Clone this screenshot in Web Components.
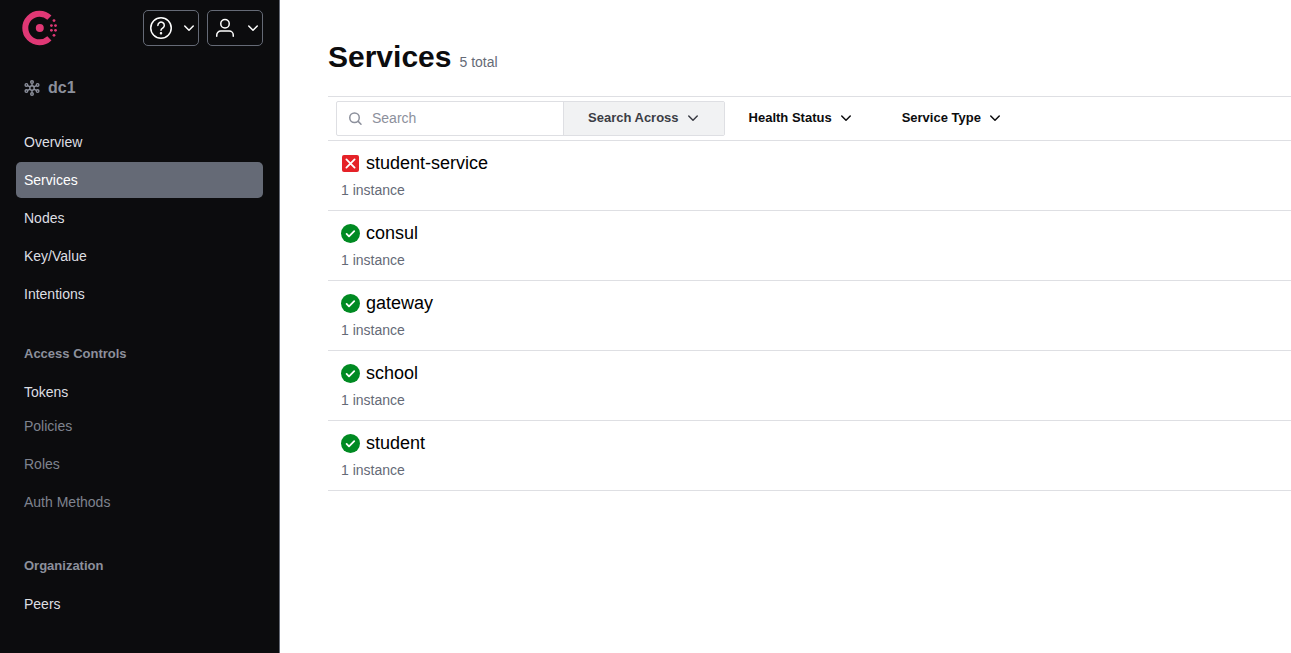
<!DOCTYPE html>
<html lang="en">
<head>
<meta charset="utf-8">
<title>Services - Consul</title>
<style>
  html, body { margin: 0; height: 100%; }
  body { font-family: "Liberation Sans", Arial, sans-serif; font-size: 14px; line-height: 20px; background: #fff; color: #0c0c0e; }
</style>
</head>
<body>
<consul-app></consul-app>

<template id="consul-app">
  <style>
    :host { display: grid; grid-template-columns: 280px minmax(0, 1fr); min-height: 100vh; }
    main { padding: 40px 0 48px 48px; }
    header { display: flex; align-items: baseline; gap: 8px; padding-bottom: 22px; }
    h1 { margin: 0; font-size: 30px; line-height: 34px; font-weight: 700; }
    header span { color: #656a76; }
    ul { margin: 0; padding: 0; list-style: none; }
  </style>
  <side-bar></side-bar>
  <main>
    <header><h1>Services</h1><span>5 total</span></header>
    <search-bar></search-bar>
    <ul>
      <li><service-row status="critical">student-service</service-row></li>
      <li><service-row status="passing">consul</service-row></li>
      <li><service-row status="passing">gateway</service-row></li>
      <li><service-row status="passing">school</service-row></li>
      <li><service-row status="passing">student</service-row></li>
    </ul>
  </main>
</template>

<template id="side-bar">
  <style>
    :host { display: block; box-sizing: border-box; background: #0c0c0e; border-right: 1px solid #656a76; padding: 10px 16px; color: #8c909c; }
    .top { display: flex; gap: 8px; align-items: center; }
    .logo { display: flex; margin: 0 auto 0 6px; }
    .dc { display: flex; align-items: center; gap: 8px; padding: 0 8px; height: 36px; margin: 24px 0 18px; font-size: 16px; font-weight: 700; }
    nav { display: flex; flex-direction: column; gap: 2px; }
    h2 { margin: 22px 0 0; padding: 0 8px; font-size: 13px; line-height: 36px; font-weight: 700; }
    .locked { display: flex; flex-direction: column; gap: 6px; padding: 0 8px; line-height: 32px; margin: -2px 0 6px; color: #7f838f; }
  </style>
  <div class="top">
    <a class="logo" href="#" aria-label="Consul">
      <svg width="36" height="36" viewBox="0 0 36 36" fill="#e03875">
        <path d="M27.4 7.6A14.3 14.3 0 1 0 27.4 28.4" fill="none" stroke="#e03875" stroke-width="6"/>
        <circle cx="17.8" cy="18" r="4"/>
        <circle cx="32" cy="10.6" r="1.4"/><circle cx="29.4" cy="15.6" r="1.4"/><circle cx="33.5" cy="15.6" r="1.4"/>
        <circle cx="29.4" cy="20.3" r="1.4"/><circle cx="33.5" cy="20.3" r="1.4"/><circle cx="32" cy="25.3" r="1.4"/>
      </svg>
    </a>
    <icon-menu label="Help">
      <svg width="24" height="24" viewBox="0 0 24 24" fill="none" stroke="#fff" stroke-width="1.5" stroke-linecap="round" stroke-linejoin="round">
        <circle cx="12" cy="12" r="10.25"/><path d="M8.9 9.4a3.2 3.2 0 1 1 4.9 2.6c-1.1.7-1.8 1.1-1.8 2.3"/><circle cx="12" cy="17.2" r=".5" fill="#fff"/>
      </svg>
    </icon-menu>
    <icon-menu label="Account">
      <svg width="24" height="24" viewBox="0 0 24 24" fill="none" stroke="#fff" stroke-width="1.5" stroke-linecap="round">
        <circle cx="12" cy="7.75" r="4.25"/><path d="M3.75 20.25V19a4 4 0 0 1 4-4h8.5a4 4 0 0 1 4 4v1.25"/>
      </svg>
    </icon-menu>
  </div>
  <div class="dc">
    <svg width="16" height="16" viewBox="0 0 16 16" fill="none" stroke="#8c909c" stroke-width="1.4">
      <circle cx="8" cy="8" r="2.2"/>
      <circle cx="8" cy="2" r="1.3"/><circle cx="8" cy="14" r="1.3"/>
      <circle cx="2.4" cy="4.9" r="1.3"/><circle cx="13.6" cy="4.9" r="1.3"/>
      <circle cx="2.4" cy="11.1" r="1.3"/><circle cx="13.6" cy="11.1" r="1.3"/>
      <path d="M8 3.5v2.3M8 10.2v2.3M3.6 5.6l2.5 1.3M9.9 9.1l2.5 1.3M12.4 5.6 9.9 6.9M6.1 9.1l-2.5 1.3"/>
    </svg>
    <span>dc1</span>
  </div>
  <nav aria-label="Main">
    <nav-item>Overview</nav-item>
    <nav-item current>Services</nav-item>
    <nav-item>Nodes</nav-item>
    <nav-item>Key/Value</nav-item>
    <nav-item>Intentions</nav-item>
    <h2>Access Controls</h2>
    <nav-item>Tokens</nav-item>
    <div class="locked"><span>Policies</span><span>Roles</span><span>Auth Methods</span></div>
    <h2>Organization</h2>
    <nav-item>Peers</nav-item>
  </nav>
</template>

<template id="icon-menu">
  <style>
    :host { display: block; }
    button { box-sizing: border-box; width: 56px; height: 36px; display: flex; align-items: center; gap: 8px; padding: 0 0 0 5px; border: 1px solid #656a76; border-radius: 5px; background: transparent; color: #fff; }
    ::slotted(svg) { display: block; flex: none; }
    chevron-icon { flex: none; }
  </style>
  <button type="button" aria-haspopup="menu"><slot></slot><chevron-icon></chevron-icon></button>
</template>

<template id="chevron-icon">
  <style>:host { display: block; width: 16px; height: 16px; } svg { display: block; }</style>
  <svg width="16" height="16" viewBox="0 0 16 16" fill="none" stroke="currentColor" stroke-width="1.5" stroke-linecap="round" stroke-linejoin="round"><path d="M3.75 6 8 10.25 12.25 6"/></svg>
</template>

<template id="nav-item">
  <style>
    :host { display: block; }
    a { display: block; padding: 8px; border-radius: 5px; color: #dedfe3; text-decoration: none; }
    :host([current]) a { background: #656a76; color: #fff; }
  </style>
  <a href="#"><slot></slot></a>
</template>

<template id="search-bar">
  <style>
    :host { display: flex; padding: 4px 8px; border: solid #dedfe3; border-width: 1px 0; }
    form { box-sizing: border-box; height: 35px; display: flex; border: 1px solid #dedfe3; border-radius: 2px; overflow: hidden; }
    label { display: flex; align-items: center; gap: 8px; padding-left: 11px; width: 215px; }
    label svg { flex: none; }
    input { min-width: 0; flex: 1; padding: 0 0 2px; border: 0; outline: 0; font: inherit; color: #3b3d45; background: transparent; }
    input::placeholder { color: #8c909c; opacity: 1; }
    menu-button { color: #0c0c0e; }
    form menu-button { background: #f1f2f3; color: #3b3d45; border-left: 1px solid #dedfe3; margin-right: -1px; }
  </style>
  <form role="search">
    <label>
      <svg width="16" height="16" viewBox="0 0 16 16" fill="none" stroke="#8c909c" stroke-width="1.5" stroke-linecap="round" aria-label="Search services"><circle cx="6.5" cy="6.75" r="4.75"/><path d="m10.2 10.4 2.8 2.8"/></svg>
      <input type="text" name="search" placeholder="Search">
    </label>
    <menu-button>Search Across</menu-button>
  </form>
  <menu-button>Health Status</menu-button>
  <menu-button>Service Type</menu-button>
</template>

<template id="menu-button">
  <style>
    :host { display: flex; }
    button { display: flex; align-items: center; gap: 6px; padding: 0 24px 2px; border: 0; background: transparent; color: inherit; font: inherit; font-size: 13px; font-weight: 700; white-space: nowrap; }
  </style>
  <button type="button" aria-haspopup="menu"><slot></slot><chevron-icon></chevron-icon></button>
</template>

<template id="service-row">
  <style>
    :host { display: block; padding: 10px 12px; border-bottom: 1px solid #dedfe3; }
    a { display: flex; align-items: center; gap: 6px; font-size: 18px; line-height: 24px; color: #000; text-decoration: none; }
    svg { display: none; }
    :host([status="critical"]) .critical, :host([status="passing"]) .passing { display: block; }
    p { margin: 5px 0 0; padding-left: 1px; color: #656a76; }
  </style>
  <a href="#">
    <svg class="critical" width="20" height="20" viewBox="0 0 20 20"><rect x="2" y="2" width="17" height="17" rx="2" fill="#e52228"/><path d="m6.4 6.4 8.2 8.2m0-8.2-8.2 8.2" stroke="#fff" stroke-width="1.8" stroke-linecap="round"/></svg>
    <svg class="passing" width="20" height="20" viewBox="0 0 20 20"><circle cx="10.5" cy="10.5" r="9.5" fill="#008a22"/><path d="m6.6 10.9 2.4 2.4 5.2-5.2" fill="none" stroke="#fff" stroke-width="1.8" stroke-linecap="round" stroke-linejoin="round"/></svg>
    <span><slot></slot></span>
  </a>
  <p>1 instance</p>
</template>

<script>
  class TemplateElement extends HTMLElement {
    constructor() {
      super();
      const template = document.getElementById(this.localName);
      this.attachShadow({ mode: "open" }).append(template.content.cloneNode(true));
    }
  }
  class ChevronIcon extends TemplateElement {}
  class NavItem extends TemplateElement {
    connectedCallback() {
      if (this.hasAttribute("current")) this.shadowRoot.querySelector("a").setAttribute("aria-current", "page");
    }
  }
  class IconMenu extends TemplateElement {
    connectedCallback() {
      this.shadowRoot.querySelector("button").setAttribute("aria-label", this.getAttribute("label"));
    }
  }
  class MenuButton extends TemplateElement {}
  class ServiceRow extends TemplateElement {}
  class SearchBar extends TemplateElement {}
  class SideBar extends TemplateElement {}
  class ConsulApp extends TemplateElement {}

  customElements.define("chevron-icon", ChevronIcon);
  customElements.define("nav-item", NavItem);
  customElements.define("icon-menu", IconMenu);
  customElements.define("menu-button", MenuButton);
  customElements.define("service-row", ServiceRow);
  customElements.define("search-bar", SearchBar);
  customElements.define("side-bar", SideBar);
  customElements.define("consul-app", ConsulApp);
</script>
</body>
</html>
